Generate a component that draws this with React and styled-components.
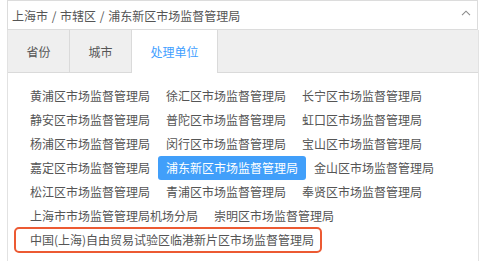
import React from "react";
import styled, { createGlobalStyle } from "styled-components";

const Global = createGlobalStyle`
  html, body { margin: 0; padding: 0; background: #fff; }
  body { font-family: "Noto Sans CJK SC", "Noto Sans", sans-serif; }
  * { box-sizing: border-box; }
`;

const Page = styled.div`
  width: 480px;
  height: 261px;
  overflow: hidden;
  padding-left: 7px;
`;

const Input = styled.div`
  width: 471px;
  height: 30px;
  border: 1px solid #dcdcdc;
  display: flex;
  align-items: center;
  justify-content: space-between;
  padding: 0 6px 0 4px;
  font-size: 12px;
  color: #555;
  word-spacing: 1px;
  background: #fff;
`;

const Chevron = styled.svg`
  width: 10px;
  height: 6px;
  margin-top: -4px;
`;

const Panel = styled.div`
  width: 472px;
  border-left: 1px solid #e2e2e2;
  border-right: 1px solid #e2e2e2;
  height: 240px;
`;

const TabBar = styled.div`
  display: flex;
  height: 43px;
  background: #efefef;
  border-bottom: 1px solid #dadada;
`;

const Tab = styled.div`
  padding: 0 18.5px;
  height: ${(p) => (p.$active ? "43px" : "42px")};
  display: flex;
  align-items: center;
  font-size: 12px;
  color: ${(p) => (p.$active ? "#409eff" : "#555")};
  background: ${(p) => (p.$active ? "#fff" : "transparent")};
  border-right: 1px solid #dadada;
  position: relative;
  z-index: 1;
`;

const Items = styled.div`
  display: flex;
  flex-wrap: wrap;
  padding: 11px 14px 0;
`;

const Item = styled.div`
  position: relative;
  height: 24px;
  line-height: 24px;
  padding: 0 8px;
  font-size: 12px;
  white-space: nowrap;
  border-radius: 3px;
  color: ${(p) => (p.$selected ? "#fff" : "#555")};
  background: ${(p) => (p.$selected ? "#419ffa" : "transparent")};
  &::after {
    content: "";
    display: ${(p) => (p.$marked ? "block" : "none")};
    position: absolute;
    left: -8px;
    right: 0;
    top: -1px;
    bottom: -1px;
    border: 2px solid #ec5a33;
    border-radius: 5px;
  }
`;

const items = [
  "黄浦区市场监督管理局",
  "徐汇区市场监督管理局",
  "长宁区市场监督管理局",
  "静安区市场监督管理局",
  "普陀区市场监督管理局",
  "虹口区市场监督管理局",
  "杨浦区市场监督管理局",
  "闵行区市场监督管理局",
  "宝山区市场监督管理局",
  "嘉定区市场监督管理局",
  "浦东新区市场监督管理局",
  "金山区市场监督管理局",
  "松江区市场监督管理局",
  "青浦区市场监督管理局",
  "奉贤区市场监督管理局",
  "上海市市场监管管理局机场分局",
  "崇明区市场监督管理局",
  "中国(上海)自由贸易试验区临港新片区市场监督管理局",
];

export default function App() {
  return (
    <Page>
      <Global />
      <Input>
        <span>上海市 / 市辖区 / 浦东新区市场监督管理局</span>
        <Chevron viewBox="0 0 10 6">
          <path d="M1 5.2 L5 1.2 L9 5.2" fill="none" stroke="#8a8a8a" strokeWidth="1.1" />
        </Chevron>
      </Input>
      <Panel>
        <TabBar>
          <Tab>省份</Tab>
          <Tab>城市</Tab>
          <Tab $active>处理单位</Tab>
        </TabBar>
        <Items>
          {items.map((t, i) => (
            <Item key={t} $selected={i === 10} $marked={i === items.length - 1}>
              {t}
            </Item>
          ))}
        </Items>
      </Panel>
    </Page>
  );
}
